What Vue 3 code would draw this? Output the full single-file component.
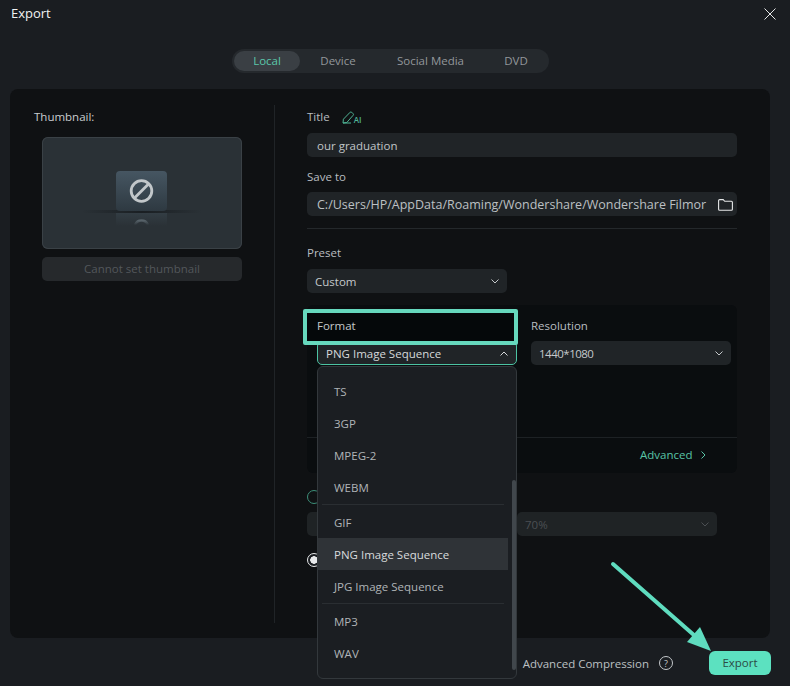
<script setup>
const tabs = ["Local", "Device", "Social Media", "DVD"];

const formats = [
  { name: "TS" },
  { name: "3GP" },
  { name: "MPEG-2" },
  { name: "WEBM", sep: true },
  { name: "GIF" },
  { name: "PNG Image Sequence", active: true },
  { name: "JPG Image Sequence", sep: true },
  { name: "MP3" },
  { name: "WAV" },
];
</script>

<template>
  <div class="page">
    <header class="head">
      <span class="head-title">Export</span>
      <svg class="close" viewBox="0 0 12 12" width="12" height="12" aria-hidden="true">
        <path d="M.5.5l11 11M11.5.5l-11 11" fill="none" stroke="currentColor" stroke-width="1" />
      </svg>
    </header>

    <nav class="tabs" aria-label="Destination">
      <a v-for="(tab, i) in tabs" :key="tab" class="tab" :class="[`tab-${i}`, { activo: i === 0 }]">{{ tab }}</a>
    </nav>

    <main class="panel">
      <section class="left">
        <div class="thumb-label">Thumbnail:</div>
        <div class="thumb">
          <svg viewBox="0 0 200 112" width="200" height="112" aria-hidden="true">
            <defs>
              <linearGradient id="tile" x1="0" y1="0" x2="0" y2="1">
                <stop offset="0" stop-color="#465662" />
                <stop offset="1" stop-color="#2e3941" />
              </linearGradient>
              <linearGradient id="shadowLine" x1="0" y1="0" x2="1" y2="0">
                <stop offset="0" stop-color="#1a1f23" stop-opacity="0" />
                <stop offset=".5" stop-color="#1a1f23" />
                <stop offset="1" stop-color="#1a1f23" stop-opacity="0" />
              </linearGradient>
              <linearGradient id="mirror" x1="0" y1="0" x2="0" y2="1">
                <stop offset="0" stop-color="#333d44" />
                <stop offset="1" stop-color="#2a3136" />
              </linearGradient>
              <linearGradient id="mirrorArc" x1="0" y1="0" x2="0" y2="1">
                <stop offset="0" stop-color="#566168" />
                <stop offset="1" stop-color="#566168" stop-opacity="0" />
              </linearGradient>
            </defs>
            <rect x="74" y="76" width="51" height="13" fill="url(#mirror)" />
            <path d="M93 88a7 7 0 0 1 13 0" fill="none" stroke="url(#mirrorArc)" stroke-width="2.500" />
            <rect x="40" y="73" width="120" height="3" fill="url(#shadowLine)" />
            <rect x="74" y="34" width="51" height="40" rx="4" fill="url(#tile)" />
            <circle cx="99.500" cy="54" r="10.300" fill="none" stroke="#c2c7ca" stroke-width="2.800" />
            <path d="M92.500 61l14-14" stroke="#c2c7ca" stroke-width="2.800" />
          </svg>
        </div>
        <div class="thumb-btn">Cannot set thumbnail</div>
      </section>

      <div class="divider"></div>

      <section class="right">
        <div class="label title-label">
          Title
          <span class="ai">
            <svg viewBox="0 0 14 13" width="14" height="13" aria-hidden="true">
              <path d="M1 12l.4-3.800L8.200 1.200a1 1 0 0 1 1.400 0l1.600 1.600a1 1 0 0 1 0 1.400L4.800 11.500zh8" fill="none" stroke="currentColor" stroke-width="1" />
            </svg>
            <b>AI</b>
          </span>
        </div>
        <div class="field title-field">our graduation</div>

        <div class="label save-label">Save to</div>
        <div class="field path-field">
          <span class="path">C:/Users/HP/AppData/Roaming/Wondershare/Wondershare Filmor</span>
          <svg class="folder" viewBox="0 0 15 12" width="15" height="12" aria-hidden="true">
            <path d="M.6 10.200V1.600a1 1 0 0 1 1-1h3.600l1.500 1.700h6.700a1 1 0 0 1 1 1v6.900a1 1 0 0 1-1 1H1.600a1 1 0 0 1-1-1z" fill="none" stroke="currentColor" stroke-width="1.100" />
          </svg>
        </div>

        <hr class="rule" />

        <div class="label preset-label">Preset</div>
        <div class="select preset">
          <span>Custom</span>
          <svg class="chev" viewBox="0 0 8 5" width="8" height="5" aria-hidden="true"><path d="M.5.5L4 4 7.500.5" /></svg>
        </div>

        <div class="format-box">
          <div class="highlight"></div>
          <div class="format-cols">
            <div class="col">
              <div class="label over">Format</div>
              <div class="select open">
                <span>PNG Image Sequence</span>
                <svg class="chev" viewBox="0 0 8 5" width="8" height="5" aria-hidden="true"><path d="M.5 4.500L4 1l3.500 3.500" /></svg>
              </div>
            </div>
            <div class="col">
              <div class="label">Resolution</div>
              <div class="select">
                <span class="res">1440*1080</span>
                <svg class="chev" viewBox="0 0 8 5" width="8" height="5" aria-hidden="true"><path d="M.5.5L4 4 7.500.5" /></svg>
              </div>
            </div>
          </div>
          <div class="format-foot">
            <span class="advanced">Advanced</span>
            <svg class="adv-chev" viewBox="0 0 5 8" width="5" height="8" aria-hidden="true"><path d="M.5.500L4 4 .5 7.500" /></svg>
          </div>

          <div class="dropdown">
            <template v-for="f in formats" :key="f.name">
              <div class="option" :class="{ activo: f.active }">{{ f.name }}</div>
              <div v-if="f.sep" class="option-sep"></div>
            </template>
            <div class="scroll"></div>
          </div>
        </div>

        <div class="radio-row"><span class="radio"></span></div>
        <div class="quality">
          <div class="select muted"></div>
          <div class="select muted">
            <span>70%</span>
            <svg class="chev" viewBox="0 0 8 5" width="8" height="5" aria-hidden="true"><path d="M.5.5L4 4 7.500.5" /></svg>
          </div>
        </div>
        <div class="radio-row second"><span class="radio on"></span></div>
      </section>
    </main>

    <footer class="foot">
      <span class="compress">Advanced Compression</span>
      <span class="help">?</span>
      <button class="export" type="button">Export</button>
    </footer>

    <!-- flecha de la captura -->
    <svg class="arrow" viewBox="0 0 790 686" width="790" height="686" aria-hidden="true">
      <path d="M613 564l82 72" stroke="#5fdcbf" stroke-width="4" stroke-linecap="round" />
      <path d="M711 651l-24-9 13-15z" fill="#5fdcbf" />
    </svg>
  </div>
</template>

<style>
html,
body {
  margin: 0;
  background: #1a1d21;
}
</style>

<style scoped>
.page {
  position: relative;
  width: 790px;
  height: 686px;
  overflow: hidden;
  background: #1a1d21;
  color: #c4c8cb;
  font-family: "Open Sans", "Noto Sans", sans-serif;
  font-size: 11.500px;
  line-height: 16px;
}

.head {
  height: 49px;
  padding: 5px 14px 0 11px;
  box-sizing: border-box;
  display: flex;
  justify-content: space-between;
  align-items: flex-start;
}
.head-title {
  color: #f1f2f3;
  font-size: 13px;
}
.close {
  margin-top: 3px;
  color: #e4e6e7;
}

.tabs {
  width: 317px;
  height: 24px;
  margin-left: 232px;
  padding: 2px;
  box-sizing: border-box;
  display: flex;
  align-items: stretch;
  border-radius: 12px;
  background: #25292d;
}
.tab {
  display: grid;
  place-items: center;
  border-radius: 10px;
  color: #93979b;
}
.tab-0 { width: 66px; }
.tab-1 { width: 76px; }
.tab-2 { width: 109px; }
.tab-3 { width: 62px; }
.tab.activo {
  color: #5bc7aa;
  background: #3a3f44;
}

.panel {
  width: 760px;
  height: 549px;
  margin: 16px 0 0 10px;
  display: flex;
  border-radius: 8px;
  background: #0f1113;
}

.left {
  width: 264px;
  padding: 20px 0 0 24px;
  box-sizing: border-box;
}
.thumb-label {
  height: 16px;
  line-height: 16px;
  color: #c9cdd0;
  font-weight: 500;
}
.thumb {
  width: 200px;
  height: 112px;
  margin: 12px 0 0 8px;
  border-radius: 6px;
  box-shadow: inset 0 0 0 1px #3a4146;
  background: #2a3136;
  overflow: hidden;
}
.thumb svg {
  display: block;
}
.thumb-btn {
  width: 200px;
  height: 24px;
  margin: 8px 0 0 8px;
  box-sizing: border-box;
  display: grid;
  place-items: center;
  border-radius: 5px;
  color: #53575b;
  background: #26292c;
}

.divider {
  width: 1px;
  margin: 16px 0 15px;
  background: #202427;
}

.right {
  width: 430px;
  padding: 20px 0 0 32px;
  box-sizing: content-box;
}
.label {
  height: 16px;
  line-height: 16px;
  color: #b9bdc0;
}
.title-label {
  display: flex;
  align-items: center;
  gap: 12px;
}
.ai {
  display: flex;
  align-items: flex-end;
  color: #4fb596;
}
.ai b {
  font-size: 8px;
  line-height: 9px;
  font-weight: 600;
  margin-left: -2px;
}
.field {
  width: 430px;
  height: 24px;
  box-sizing: border-box;
  padding: 2px 10px 0;
  display: flex;
  align-items: center;
  justify-content: space-between;
  border-radius: 5px;
  background: #202427;
}
.title-field {
  margin-top: 8px;
  color: #c0c4c7;
}
.save-label {
  margin-top: 12px;
}
.path-field {
  margin-top: 7px;
  padding-right: 4px;
}
.path {
  font-size: 12.500px;
  white-space: nowrap;
  color: #bcc0c3;
}
.folder {
  color: #e6e8e9;
}
.rule {
  width: 430px;
  height: 1px;
  margin: 12px 0 0;
  border: 0;
  background: #24282b;
}
.preset-label {
  margin-top: 16px;
}

.select {
  width: 200px;
  height: 24px;
  box-sizing: border-box;
  padding: 0 8px;
  display: flex;
  align-items: center;
  justify-content: space-between;
  border-radius: 5px;
  background: #202427;
  color: #c4c8cb;
}
.select span {
  position: relative;
  top: 1px;
}
.res {
  letter-spacing: -0.5px;
}
.preset {
  margin-top: 8px;
}
.chev {
  fill: none;
  stroke: currentColor;
  stroke-width: 1;
  margin-right: 0;
}

.format-box {
  position: relative;
  width: 430px;
  height: 168px;
  margin-top: 12px;
  border-radius: 6px;
  background: #0a0d0f;
}
.highlight {
  position: absolute;
  z-index: 1;
  left: -4px;
  top: 4px;
  width: 215px;
  height: 36px;
  box-sizing: border-box;
  border: 4px solid #66d8bd;
  border-radius: 2px;
  background: #05080a;
}
.format-cols {
  display: flex;
  gap: 14px;
  padding: 13px 0 0 10px;
}
.col .select {
  margin-top: 7px;
}
.over {
  position: relative;
  z-index: 2;
  color: #c4c8cb;
}
.open {
  border: 1px solid #4cc3a3;
  color: #d6d9db;
}
.format-foot {
  height: 34px;
  margin-top: 72px;
  padding-left: 333px;
  display: flex;
  align-items: center;
  gap: 8px;
  border-top: 1px solid #1d2124;
}
.advanced {
  color: #58c4a6;
  font-weight: 500;
}
.adv-chev {
  fill: none;
  stroke: #58c4a6;
  stroke-width: 1;
}

.dropdown {
  position: absolute;
  z-index: 3;
  left: 10px;
  top: 61px;
  width: 200px;
  height: 313px;
  box-sizing: border-box;
  padding-top: 9px;
  border: 1px solid #33383c;
  border-radius: 6px;
  background: #1b1e22;
}
.option {
  width: 190px;
  height: 32px;
  padding-left: 16px;
  box-sizing: border-box;
  display: flex;
  align-items: center;
  color: #b0b4b7;
}
.option.activo {
  margin: -1px 0 1px;
  padding-top: 2px;
  color: #d8dbdd;
  background: #2f3337;
}
.option-sep {
  width: 182px;
  height: 1px;
  margin: 0 0 2px 4px;
  background: #2a2e32;
}
.scroll {
  position: absolute;
  right: 0;
  top: 113px;
  width: 4px;
  height: 190px;
  border-radius: 2px;
  background: #41474c;
}

.radio-row {
  height: 16px;
  margin-top: 16px;
  display: flex;
  align-items: center;
}
.radio {
  width: 14px;
  height: 14px;
  box-sizing: border-box;
  border: 1px solid #3d8f79;
  border-radius: 50%;
}
.radio.on {
  border: 1px solid #e8eaeb;
  background: radial-gradient(circle, #e8eaeb 0 3.500px, #1a1d21 4px);
}
.quality {
  display: flex;
  gap: 10px;
  margin-top: 7px;
}
.muted {
  color: #4b4f53;
  background: #1f2325;
}

.foot {
  height: 48px;
  padding: 13px 19px 0 0;
  box-sizing: border-box;
  display: flex;
  justify-content: flex-end;
  align-items: flex-start;
}
.compress {
  margin-top: 5px;
  color: #bcc0c3;
}
.help {
  width: 14px;
  height: 14px;
  margin: 5px 0 0 10px;
  box-sizing: border-box;
  border: 1px solid #c4c8cb;
  border-radius: 50%;
  display: grid;
  place-items: center;
  font-size: 9px;
  line-height: 1;
}
.export {
  width: 62px;
  height: 24px;
  margin-left: 36px;
  padding: 0;
  border: 0;
  border-radius: 6px;
  background: #5ce1c0;
  color: #2c4a44;
  font: inherit;
}

.arrow {
  position: absolute;
  left: 0;
  top: 0;
  pointer-events: none;
}
</style>
